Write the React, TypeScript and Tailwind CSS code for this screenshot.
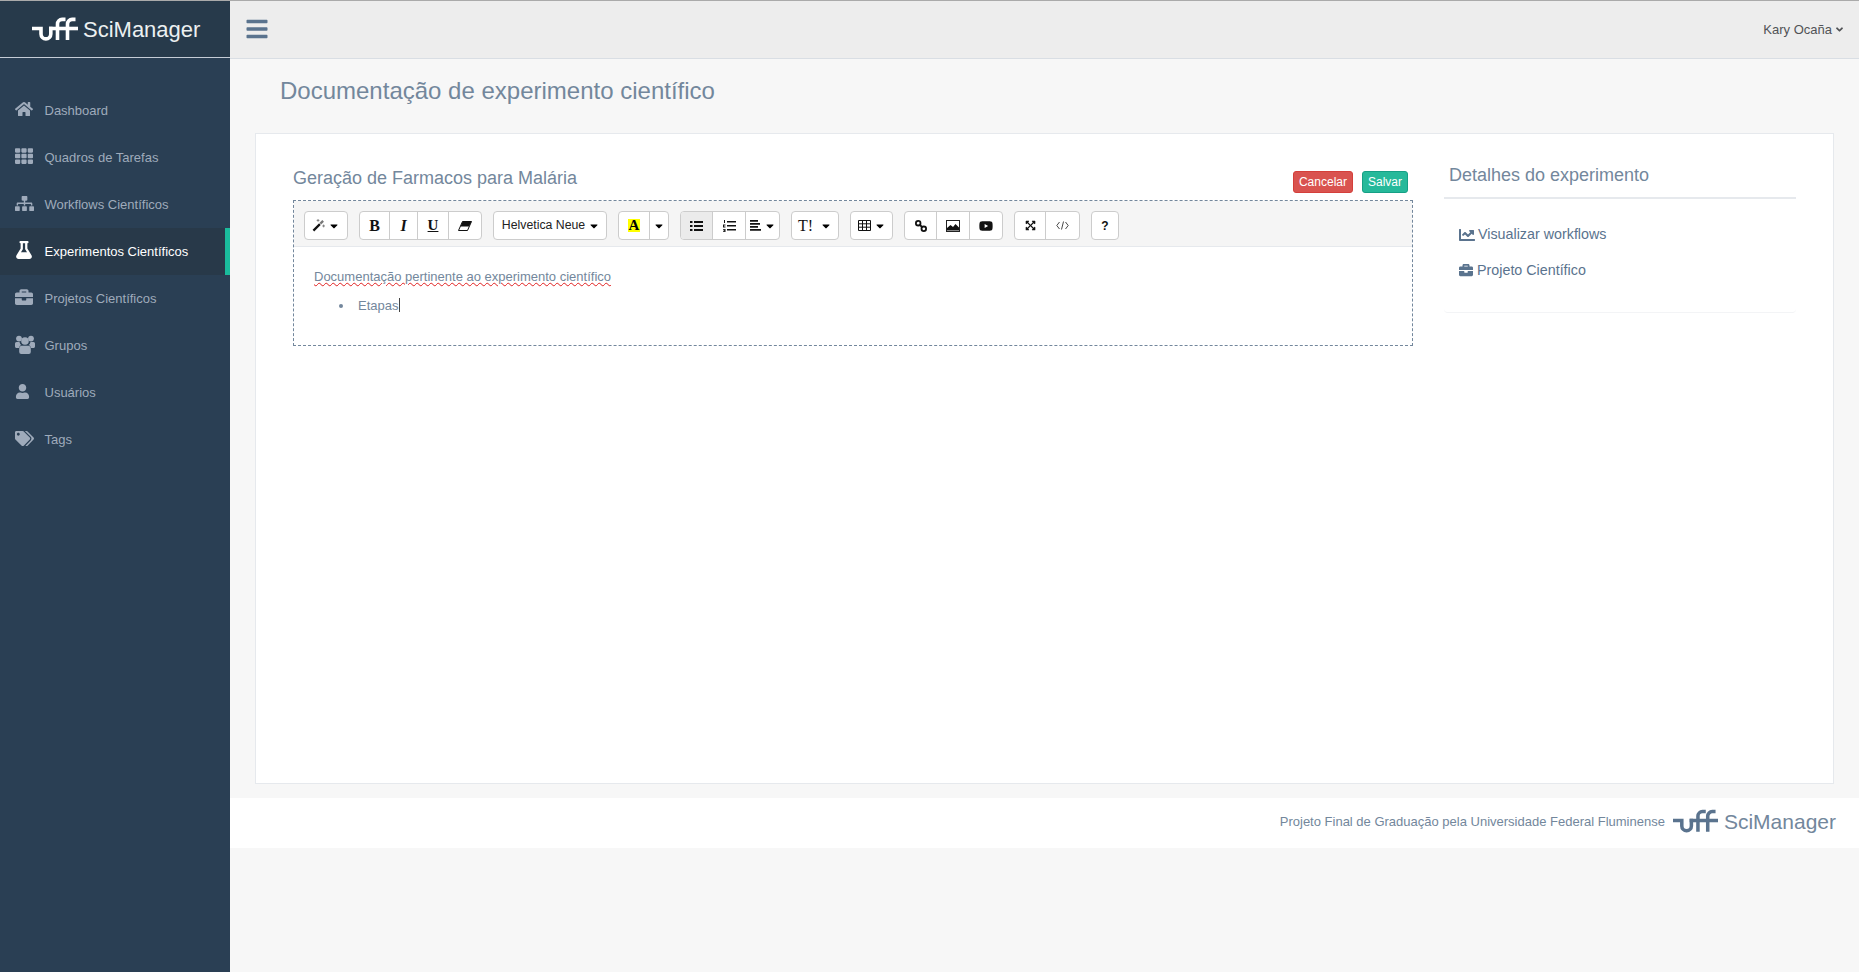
import React from "react";
import { FaHome, FaTh, FaSitemap, FaFlask, FaBriefcase, FaUser, FaTags, FaBars, FaChartLine, FaAngleDown, FaYoutube, FaExpandArrowsAlt, FaCaretDown } from "react-icons/fa";

function UffLogo({ color, className }: { color: string; className: string }) {
  return (
    <svg viewBox="0 0 46 24" className={className} fill="none" stroke={color} strokeWidth="3.6">
      <path d="M0 11.5H9V17a4.9 4.9 0 0 0 9.8 0V9.7" />
      <path d="M17 11.5H46" />
      <path d="M25.5 23V7a4.6 4.6 0 0 1 4.6-4.6h3.4" />
      <path d="M35.5 23V7a4.6 4.6 0 0 1 4.6-4.6h3.4" />
    </svg>
  );
}

function UsersIcon() {
  return (
    <svg viewBox="0 0 20 19" className="h-[19px] w-[20px]" fill="currentColor">
      <circle cx="4" cy="3.6" r="2.9" />
      <circle cx="16" cy="3.6" r="2.9" />
      <circle cx="10" cy="6" r="3.8" />
      <path d="M0 8.6q0-1.6 1.5-1.6h3q.4 2 1.6 3-1.6.7-2 3H1.2Q0 13 0 11.6z" />
      <path d="M20 8.6q0-1.6-1.5-1.6h-3q-.4 2-1.6 3 1.6.7 2 3h2.9q1.2 0 1.2-1.4z" />
      <path d="M6 10.8h8q1.8.4 1.8 3V17q0 2-2 2H6.200q-2 0-2-2v-3.200q0-2.600 1.800-3z" />
    </svg>
  );
}

const nav: { label: string; icon: React.ReactNode; active?: boolean }[] = [
  { label: "Dashboard", icon: <FaHome className="text-[18px]" /> },
  { label: "Quadros de Tarefas", icon: <FaTh className="text-[18px]" /> },
  { label: "Workflows Científicos", icon: <FaSitemap className="text-[19px]" /> },
  { label: "Experimentos Científicos", icon: <FaFlask className="text-[18px]" />, active: true },
  { label: "Projetos Científicos", icon: <FaBriefcase className="text-[18px]" /> },
  { label: "Grupos", icon: <UsersIcon /> },
  { label: "Usuários", icon: <FaUser className="text-[15px]" /> },
  { label: "Tags", icon: <FaTags className="text-[19px]" /> },
];

const caret = <FaCaretDown className="text-[12px] text-black" />;

const WandIcon = (
  <svg viewBox="0 0 14 14" className="h-[13px] w-[13px]">
    <path d="M1.500 12.500L8.500 5.500" stroke="#111" strokeWidth="2.4" />
    <path d="M9 5L12 2" stroke="#777" strokeWidth="2.400" />
    <path d="M5 1.500h3M6.500 0v3M11 7.500h3M12.500 6v3" stroke="#666" strokeWidth="0.8" />
  </svg>
);
const EraserIcon = (
  <svg viewBox="0 0 14 10" className="h-[10px] w-[14px]">
    <path d="M4.500.5H13.500L9.500 9.500H.5z" fill="#fff" stroke="#111" strokeWidth="1" />
    <path d="M4.500.5H13.500L11 5.500H2.500z" fill="#111" />
  </svg>
);
const UlIcon = (
  <svg viewBox="0 0 13 10" className="h-[10px] w-[13px]" fill="#111">
    <path d="M0 0h2.500v2H0zM4 0h9v2H4zM0 4h2.500v2H0zM4 4h9v2H4zM0 8h2.500v2H0zM4 8h9v2H4z" />
  </svg>
);
const OlIcon = (
  <svg viewBox="0 0 13 12" className="h-[12px] w-[13px]" fill="#111">
    <path d="M4 1h9v1.600H4zM4 5h9v1.600H4zM4 9h9v1.600H4zM1 0h1v3H1zM0 4.500h2.500v1H1v1h1.500v1H0zM0 9h2.500v3H0v-.7h1.500v-.4H.6v-.7h.9v-.4H0z" />
  </svg>
);
const AlignIcon = (
  <svg viewBox="0 0 11 11" className="h-[11px] w-[11px]" fill="#111">
    <path d="M0 0h8v1.800H0zM0 3h10v1.800H0zM0 6h8v1.800H0zM0 9h11v1.800H0z" />
  </svg>
);
const TableIcon = (
  <svg viewBox="0 0 13 11" className="h-[11px] w-[13px]" fill="none" stroke="#111" strokeWidth="1">
    <path d="M.5.5h12v10H.5zM.5 3.800h12M.5 7.200h12M4.500.5v10M8.500.5v10" />
  </svg>
);
const LinkIcon = (
  <svg viewBox="0 0 12 12" className="h-[12px] w-[12px]" fill="none" stroke="#111" strokeWidth="1.800">
    <circle cx="3.200" cy="3.200" r="2.300" />
    <circle cx="8.800" cy="8.800" r="2.300" />
    <path d="M4.500 4.500l3 3" />
  </svg>
);
const ImageIcon = (
  <svg viewBox="0 0 14 12" className="h-[12px] w-[14px]">
    <rect x="0.500" y="0.500" width="13" height="11" fill="#fff" stroke="#222" />
    <path d="M1 10.500V8l3.500-3 2.500 2 2.500-3 3.500 3.500v3z" fill="#111" />
  </svg>
);
const CodeIcon = (
  <svg viewBox="0 0 13 9" className="h-[9px] w-[13px]" fill="none" stroke="#333" strokeWidth="0.9">
    <path d="M3.500 1L.8 4.500l2.700 3.500M9.500 1l2.700 3.500L9.500 8M7.500.5l-2 8" />
  </svg>
);

function Group({ children }: { children: React.ReactNode }) {
  return (
    <div className="flex h-[29px] overflow-hidden rounded-[4px] border border-[#cccccc] bg-white text-[#111] divide-x divide-[#cccccc]">
      {children}
    </div>
  );
}

function Btn({ w, active, children }: { w: string; active?: boolean; children: React.ReactNode }) {
  return (
    <div className={`${w} flex items-center justify-center gap-[3px] ${active ? "bg-[#ebebeb]" : ""}`}>{children}</div>
  );
}

function Toolbar() {
  return (
    <div className="flex h-[46px] items-start gap-[11px] border-b border-[#e6e9ed] bg-[#f5f5f5] pt-[10px] pl-[10px]">
      <Group><Btn w="w-[42px]">{WandIcon}{caret}</Btn></Group>
      <Group>
        <Btn w="w-[30px]"><span className="font-['Liberation_Serif'] text-[16px] font-bold">B</span></Btn>
        <Btn w="w-[28px]"><span className="font-['Liberation_Serif'] text-[16px] font-bold italic">I</span></Btn>
        <Btn w="w-[31px]"><span className="font-['Liberation_Serif'] text-[15px] font-bold underline">U</span></Btn>
        <Btn w="w-[32px]">{EraserIcon}</Btn>
      </Group>
      <Group><Btn w="w-[112px]"><span className="ml-[2px] text-[12.3px] text-[#222]">Helvetica Neue</span>{caret}</Btn></Group>
      <Group>
        <Btn w="w-[31px]"><span className="bg-[#ffff00] px-[1px] font-['Liberation_Serif'] text-[15px] leading-[13px] font-bold text-black">A</span></Btn>
        <Btn w="w-[18px]">{caret}</Btn>
      </Group>
      <Group>
        <Btn w="w-[32px]" active>{UlIcon}</Btn>
        <Btn w="w-[33px]">{OlIcon}</Btn>
        <Btn w="w-[33px]">{AlignIcon}{caret}</Btn>
      </Group>
      <Group><Btn w="w-[46px]"><span className="mr-[4px] font-['Liberation_Serif'] text-[16px]">T!</span>{caret}</Btn></Group>
      <Group><Btn w="w-[41px]">{TableIcon}{caret}</Btn></Group>
      <Group>
        <Btn w="w-[32px]">{LinkIcon}</Btn>
        <Btn w="w-[33px]">{ImageIcon}</Btn>
        <Btn w="w-[32px]"><FaYoutube className="text-[14px]" /></Btn>
      </Group>
      <Group>
        <Btn w="w-[31px]"><FaExpandArrowsAlt className="text-[11px]" /></Btn>
        <Btn w="w-[33px]">{CodeIcon}</Btn>
      </Group>
      <Group><Btn w="w-[26px]"><span className="text-[12px] font-bold">?</span></Btn></Group>
    </div>
  );
}

export default function App() {
  return (
    <div className="flex min-h-screen flex-col bg-[#f7f7f7] font-['Liberation_Sans',Arial,sans-serif] text-[#73879c]">
      <div className="h-px bg-[#aaaaaa]" />
      <div className="flex flex-1">
        <aside className="w-[230px] shrink-0 bg-[#2a3f54]">
          <div className="flex h-[57px] items-center gap-[5px] border-b border-[#c5ccd6] bg-[#273a4b] pl-[32px]">
            <UffLogo color="#ffffff" className="h-[24px] w-[46px]" />
            <span className="text-[22px] text-[#ecf0f1]">SciManager</span>
          </div>
          <ul className="pt-[29px]">
            {nav.map(({ label, icon, active }) => (
              <li
                key={label}
                className={`flex h-[47px] items-center text-[13px] ${active ? "border-r-[5px] border-[#1abb9c] bg-[#283949] text-white" : "text-[#9fabbb]"}`}
              >
                <span className="-mt-[3px] flex w-[44.5px] pl-[15px]">{icon}</span>
                {label}
              </li>
            ))}
          </ul>
        </aside>
        <main className="min-w-0 flex-1">
          <header className="flex h-[58px] items-center justify-between border-b border-[#d9dee4] bg-[#ededed] pr-[14px] pl-[15px]">
            <FaBars className="-mt-[1px] h-[24px] w-[24px] text-[#5a738e]" />
            <div className="flex items-center gap-[2px] text-[13px] text-[#515356]">
              Kary Ocaña <FaAngleDown className="text-[11px]" />
            </div>
          </header>
          <div className="px-[25px] pt-[16px]">
            <h1 className="pl-[25px] text-[24px] leading-[32px]">Documentação de experimento científico</h1>
            <section className="mt-[26px] flex h-[651px] border border-[#e6e9ed] bg-white pt-[30px] pr-[37px] pl-[37px]">
              <div className="w-[1120px] shrink-0">
                <div className="flex h-[36px] items-start justify-between pr-[5px]">
                  <h2 className="text-[18px] leading-[28px]">Geração de Farmacos para Malária</h2>
                  <div className="mt-[7px] flex gap-[9px] text-[12px] leading-[20px] text-white">
                    <span className="rounded-[3px] border border-[#d43f3a] bg-[#d9534f] px-[5px]">Cancelar</span>
                    <span className="rounded-[3px] border border-[#169f85] bg-[#26b99a] px-[5px]">Salvar</span>
                  </div>
                </div>
                <div className="h-[146px] border border-dashed border-[#73879c]">
                  <Toolbar />
                  <div className="px-[20px] pt-[21px] text-[13px]">
                    <p className="leading-[18px] underline decoration-[#e02020] decoration-wavy decoration-1">
                      Documentação pertinente ao experimento científico
                    </p>
                    <ul className="mt-[10px] pl-[25px] leading-[18px]">
                      <li className="flex items-center gap-[15px]">
                        <span className="h-[4px] w-[4px] rounded-full bg-[#73879c]" />
                        <span>
                          Etapas<span className="ml-px inline-block h-[14px] w-px translate-y-[2px] bg-[#444]" />
                        </span>
                      </li>
                    </ul>
                  </div>
                </div>
              </div>
              <div className="ml-[31px] flex-1">
                <h3 className="-mt-[4px] pl-[5px] text-[18px] leading-[30px]">Detalhes do experimento</h3>
                <div className="mt-[7px] h-[116px] rounded-b-[4px] border-t-2 border-b border-t-[#e6e9ed] border-b-[#f3f4f6] pt-[25px] pl-[15px] text-[14.3px] text-[#5a738e]">
                  <div className="flex h-[36px] items-start gap-[3px] leading-[20px]">
                    <FaChartLine className="mt-[3px] text-[16px]" /> Visualizar workflows
                  </div>
                  <div className="flex items-start gap-[4px] leading-[20px]">
                    <FaBriefcase className="mt-[3px] text-[14px]" /> Projeto Científico
                  </div>
                </div>
              </div>
            </section>
          </div>
          <footer className="mt-[14px] flex h-[50px] items-center justify-end bg-white pr-[23px]">
            <span className="-mt-[3px] mr-[8px] text-[13px]">Projeto Final de Graduação pela Universidade Federal Fluminense</span>
            <UffLogo color="#5a738e" className="-mt-[4px] mr-[6px] h-[24px] w-[45px]" />
            <span className="-mt-[3px] text-[21px]">SciManager</span>
          </footer>
        </main>
      </div>
    </div>
  );
}
